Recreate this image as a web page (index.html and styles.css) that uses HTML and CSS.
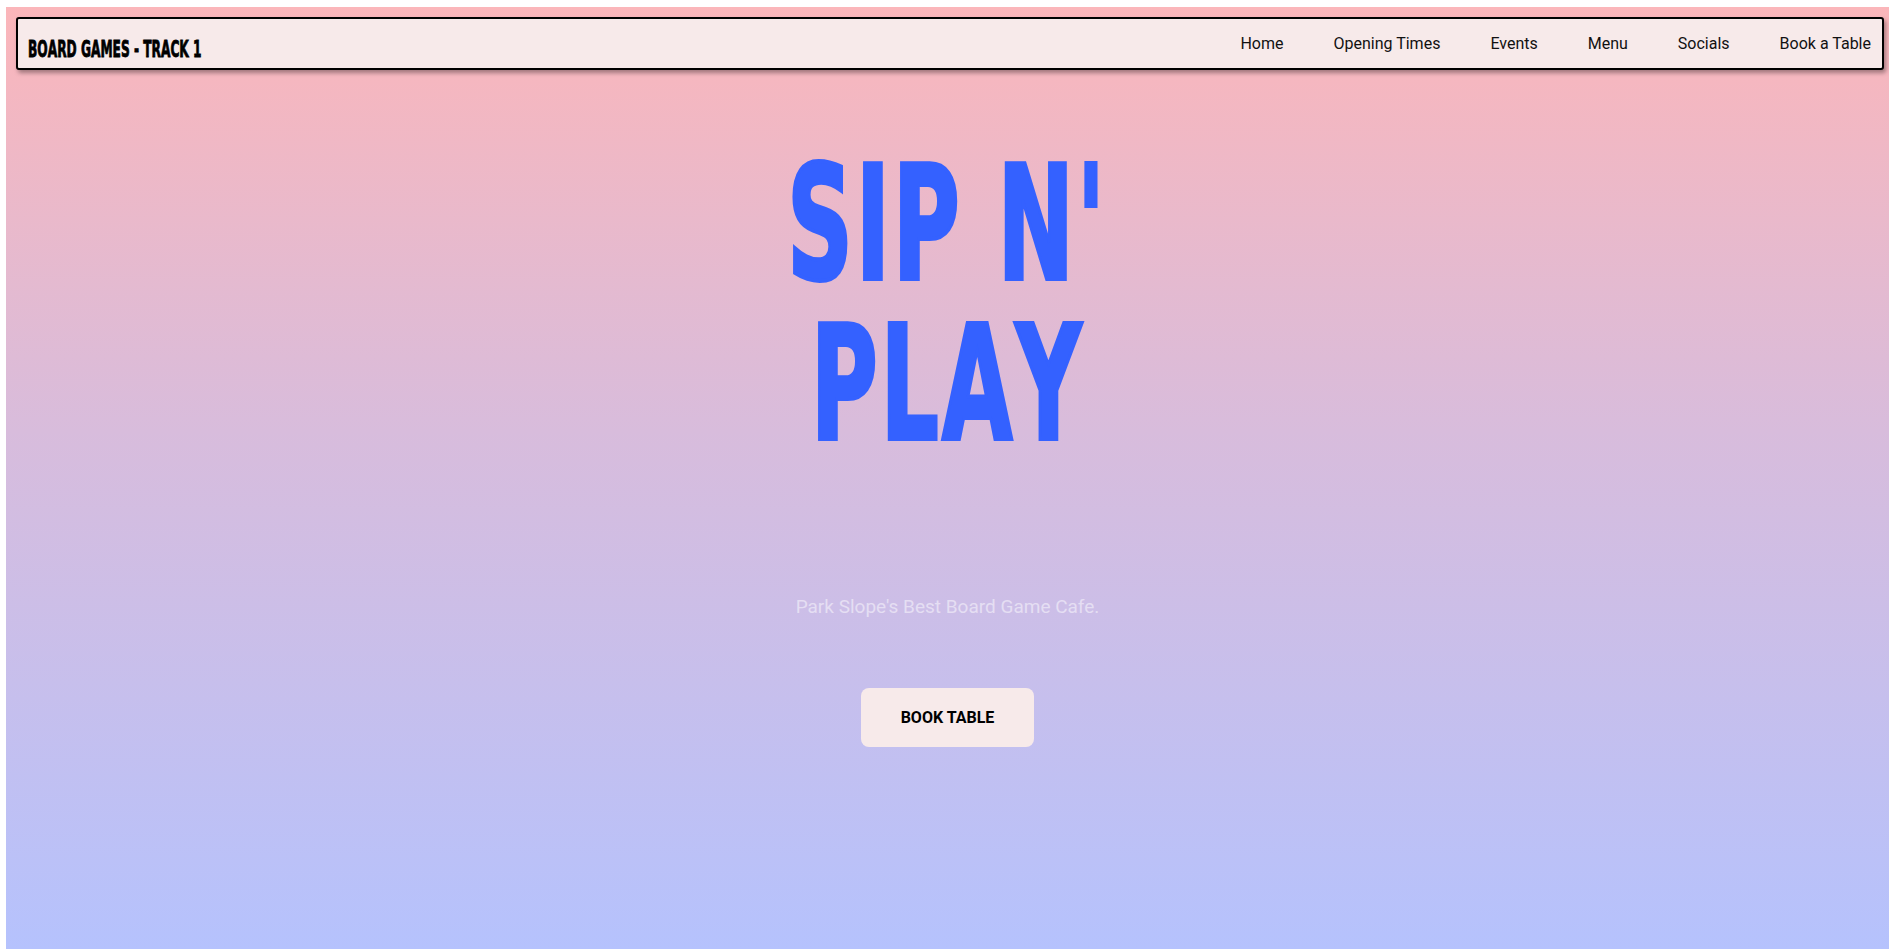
FILE: index.html
```html
<!DOCTYPE html>
<html lang="en">
<head>
<meta charset="utf-8">
<title>Sip N' Play</title>
<link rel="stylesheet" href="styles.css">
</head>
<body>
<div class="page">
  <header class="navbar">
    <div class="logo"><span class="logo-text">Board Games - Track 1</span></div>
    <nav class="nav-links">
      <a href="#" class="nav-link">Home</a>
      <a href="#" class="nav-link">Opening Times</a>
      <a href="#" class="nav-link">Events</a>
      <a href="#" class="nav-link">Menu</a>
      <a href="#" class="nav-link">Socials</a>
      <a href="#" class="nav-link">Book a Table</a>
    </nav>
  </header>
  <main class="hero">
    <h1 class="hero-title"><span class="title-line">SIP N'</span><span class="title-line">PLAY</span></h1>
    <p class="hero-sub">Park Slope's Best Board Game Cafe.</p>
    <a href="#" class="book-btn">BOOK TABLE</a>
  </main>
</div>
</body>
</html>
```
FILE: styles.css
```css
html, body {
  margin: 0;
  padding: 0;
  overflow: hidden;
  background: #ffffff;
}

body {
  padding: 7px 0 0 6px;
  font-family: Roboto, "Liberation Sans", sans-serif;
}

.page {
  height: calc(100vh - 7px);
  background: linear-gradient(180deg, #fbb6ba 0%, #d8bcdc 45%, #b5c2fd 100%);
  overflow: hidden;
}

.navbar {
  box-sizing: border-box;
  height: 53px;
  margin: 10px 5px 0 10px;
  border: 2px solid #000;
  border-radius: 3px;
  background: #f7eaea;
  box-shadow: 2px 3px 4px rgba(0, 0, 0, 0.35);
  display: flex;
  justify-content: space-between;
  padding: 0 11px 0 10px;
}

.logo {
  align-self: flex-start;
  margin-top: 19px;
  line-height: 1;
}

.logo-text {
  display: inline-block;
  font-family: "DejaVu Sans Condensed", "DejaVu Sans", sans-serif;
  font-stretch: condensed;
  font-weight: 700;
  font-size: 23px;
  font-kerning: none;
  text-transform: uppercase;
  color: #000;
  transform: scaleX(0.59);
  transform-origin: left center;
  -webkit-text-stroke: 0.8px #000;
  white-space: nowrap;
}

.nav-links {
  display: flex;
  align-items: center;
  gap: 50px;
}

.nav-link {
  font-size: 16px;
  color: #111;
  text-decoration: none;
}

.hero {
  display: flex;
  flex-direction: column;
  align-items: center;
}

.hero-title {
  margin: 74px 0 0 0;
  font-family: "DejaVu Sans Condensed", "DejaVu Sans", sans-serif;
  font-stretch: condensed;
  font-weight: 700;
  font-size: 158px;
  font-kerning: none;
  line-height: 160px;
  color: #3461ff;
  display: flex;
  flex-direction: column;
  align-items: center;
}

.title-line {
  display: block;
  transform: scaleX(0.64);
  letter-spacing: 5px;
  -webkit-text-stroke: 4px #3461ff;
  white-space: nowrap;
}

.hero-sub {
  margin: 131px 0 0 0;
  font-size: 19px;
  color: rgba(255, 255, 255, 0.5);
}

.book-btn {
  margin-top: 70px;
  padding: 20px 40px;
  border-radius: 8px;
  background: #f7eaea;
  color: #000;
  font-size: 16px;
  font-weight: 700;
  text-decoration: none;
}
```
